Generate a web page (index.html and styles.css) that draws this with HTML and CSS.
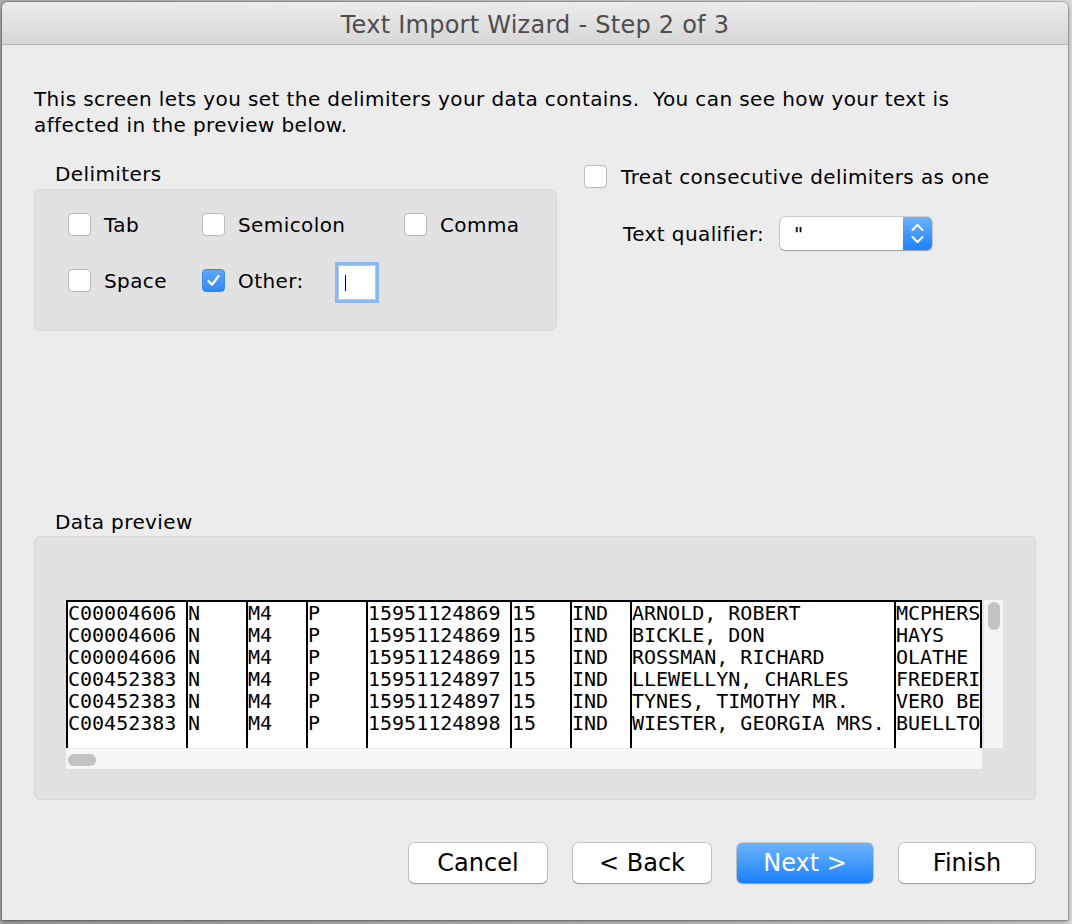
FILE: index.html
```html
<!DOCTYPE html>
<html>
<head>
<meta charset="utf-8">
<title>Text Import Wizard - Step 2 of 3</title>
<link rel="stylesheet" href="styles.css">
</head>
<body>
<div class="window">
  <div class="titlebar">Text Import Wizard - Step 2 of 3</div>
  <div class="content">
    <p class="intro">This screen lets you set the delimiters your data contains.&nbsp; You can see how your text is<br>affected in the preview below.</p>

    <div class="options">
      <div class="delims">
        <div class="group-label">Delimiters</div>
        <div class="group-box">
          <div class="checks">
            <label class="check"><span class="box"></span><span>Tab</span></label>
            <label class="check"><span class="box"></span><span>Semicolon</span></label>
            <label class="check"><span class="box"></span><span>Comma</span></label>
            <label class="check"><span class="box"></span><span>Space</span></label>
            <label class="check"><span class="box on"><svg width="21" height="21" viewBox="0 0 21 21"><path d="M5.5 11 L9 14.8 L15.5 6" fill="none" stroke="#fff" stroke-width="2.2" stroke-linecap="round" stroke-linejoin="round"/></svg></span><span>Other:</span><span class="field"><span class="caret"></span></span></label>
          </div>
        </div>
      </div>
      <div class="right">
        <label class="check treat"><span class="box"></span><span>Treat consecutive delimiters as one</span></label>
        <div class="qualifier">
          <span>Text qualifier:</span>
          <div class="popup">
            <span class="popup-value">"</span>
            <span class="popup-arrows"><svg width="29" height="33" viewBox="0 0 29 33"><path d="M9.5 13 L14.5 8 L19.5 13" fill="none" stroke="#fff" stroke-width="2" stroke-linecap="round" stroke-linejoin="round"/><path d="M9.5 20 L14.5 25 L19.5 20" fill="none" stroke="#fff" stroke-width="2" stroke-linecap="round" stroke-linejoin="round"/></svg></span>
          </div>
        </div>
      </div>
    </div>

    <div class="group-label preview-label">Data preview</div>
    <div class="preview-box">
      <div class="frame">
        <div class="grid-area">
          <div class="cols">
            <div class="col w120">C00004606
C00004606
C00004606
C00452383
C00452383
C00452383</div>
            <div class="col w60">N
N
N
N
N
N</div>
            <div class="col w60">M4
M4
M4
M4
M4
M4</div>
            <div class="col w60">P
P
P
P
P
P</div>
            <div class="col w144">15951124869
15951124869
15951124869
15951124897
15951124897
15951124898</div>
            <div class="col w60">15
15
15
15
15
15</div>
            <div class="col w60">IND
IND
IND
IND
IND
IND</div>
            <div class="col w264">ARNOLD, ROBERT
BICKLE, DON
ROSSMAN, RICHARD
LLEWELLYN, CHARLES
TYNES, TIMOTHY MR.
WIESTER, GEORGIA MRS.</div>
            <div class="col last">MCPHERS
HAYS
OLATHE
FREDERI
VERO BE
BUELLTO</div>
          </div>
          <div class="hscroll"><div class="hthumb"></div></div>
        </div>
        <div class="vscroll"><div class="vthumb"></div></div>
      </div>
    </div>

    <div class="buttons">
      <button class="btn wide">Cancel</button>
      <button class="btn wide">&lt; Back</button>
      <button class="btn primary">Next &gt;</button>
      <button class="btn">Finish</button>
    </div>
  </div>
</div>
</body>
</html>
```

FILE: styles.css
```css
html, body {
  margin: 0;
  padding: 0;
}
body {
  width: 1072px;
  height: 924px;
  overflow: hidden;
  background: linear-gradient(90deg, #a8a8a8, #bdbdbd 50%, #d9d9d9);
  font-family: "DejaVu Sans", "Noto Sans", sans-serif;
  color: #000;
}
.window {
  margin: 2px 4px 0 2px;
  width: 1066px;
  height: 918px;
  background: #ececec;
  border-radius: 6px 6px 0 0;
  box-shadow: 0 0 0 1px rgba(0,0,0,0.18), 0 2px 5px rgba(0,0,0,0.35);
  display: flex;
  flex-direction: column;
  overflow: hidden;
}
.titlebar {
  height: 43px;
  box-sizing: border-box;
  padding-top: 3px;
  flex: none;
  border-bottom: 1px solid #b4b4b4;
  background: linear-gradient(#ececec, #d7d7d7);
  display: flex;
  align-items: center;
  justify-content: center;
  font-size: 24px;
  letter-spacing: 0.25px;
  color: #4d4d4d;
}
.content {
  padding: 0 32px;
  letter-spacing: 0.4px;
}
.intro {
  margin: 41px 0 0;
  font-size: 20px;
  line-height: 26px;
}
.options {
  display: flex;
  margin-top: 24px;
}
.delims {
  width: 523px;
  flex: none;
}
.group-label {
  font-size: 20px;
  line-height: 24px;
  padding-left: 21px;
}
.group-box {
  margin-top: 3px;
  height: 142px;
  box-sizing: border-box;
  background: #e2e2e2;
  border: 1px solid #d8d8d8;
  border-radius: 6px;
  padding: 23px 0 0 33px;
}
.checks {
  display: grid;
  grid-template-columns: 134px 202px auto;
  row-gap: 33px;
}
.check {
  display: flex;
  align-items: center;
  gap: 13px;
  font-size: 20px;
  height: 23px;
  white-space: nowrap;
}
.box {
  width: 23px;
  height: 23px;
  flex: none;
  box-sizing: border-box;
  border: 1px solid #bcbcbc;
  border-radius: 4px;
  background: #fff;
  box-shadow: 0 0.5px 0 rgba(0,0,0,0.06);
  display: flex;
  align-items: center;
  justify-content: center;
}
.box.on {
  background: linear-gradient(#5fa8f9, #2f87f6);
  border-color: #3a86e8;
}
.field {
  width: 44px;
  height: 41px;
  box-sizing: border-box;
  flex: none;
  margin-left: 18px;
  margin-top: 4px;
  border: 3px solid #8ab7ed;
  background: #fff;
  box-shadow: inset 0 0 0 1px #b8c8dc;
  display: flex;
  align-items: center;
  padding-left: 7px;
}
.caret {
  width: 1px;
  height: 16px;
  background: #000;
}
.right {
  margin-left: 27px;
  padding-top: 3px;
}
.treat {
  gap: 14px;
}
.qualifier {
  display: flex;
  align-items: center;
  margin-top: 29px;
  padding-left: 39px;
  font-size: 20px;
}
.popup {
  margin-left: 16px;
  width: 152px;
  height: 33px;
  box-sizing: border-box;
  border-radius: 5px;
  background: #fff;
  box-shadow: 0 0 0 0.5px rgba(0,0,0,0.28), 0 1px 1.5px rgba(0,0,0,0.22);
  display: flex;
  align-items: center;
  overflow: hidden;
}
.popup-value {
  flex: 1;
  padding-left: 14px;
  font-size: 20px;
}
.popup-arrows {
  width: 29px;
  height: 33px;
  background: linear-gradient(#6cb2fb, #1c81fa);
  display: flex;
}
.preview-label {
  margin-top: 179px;
}
.preview-box {
  margin-top: 2px;
  height: 264px;
  box-sizing: border-box;
  background: #e2e2e2;
  border: 1px solid #d8d8d8;
  border-radius: 6px;
  padding: 63px 0 0 31px;
}
.frame {
  display: flex;
}
.grid-area {
  width: 916px;
  flex: none;
}
.cols {
  display: flex;
  height: 148px;
  box-sizing: border-box;
  border-top: 2px solid #000;
  background: #fff;
}
.col {
  box-sizing: border-box;
  border-left: 2px solid #000;
  font-family: "DejaVu Sans Mono", "Liberation Mono", monospace;
  font-size: 20px;
  line-height: 22px;
  letter-spacing: 0;
  white-space: pre;
  overflow: hidden;
  flex: none;
}
.w60 { width: 60px; }
.w120 { width: 120px; }
.w144 { width: 144px; }
.w264 { width: 264px; }
.col.last {
  width: 88px;
  border-right: 2px solid #000;
}
.hscroll {
  height: 21px;
  box-sizing: border-box;
  background: #f7f7f7;
  border-top: 1px solid #e9e9e9;
  padding: 5px 0 0 2px;
}
.hthumb {
  width: 28px;
  height: 12px;
  border-radius: 6px;
  background: #c2c2c2;
}
.vscroll {
  margin-left: 2px;
  width: 19px;
  height: 148px;
  box-sizing: border-box;
  background: #f5f5f5;
  padding: 2px 0 0 4px;
}
.vthumb {
  width: 12px;
  height: 28px;
  border-radius: 6px;
  background: #c2c2c2;
}
.buttons {
  display: flex;
  justify-content: flex-end;
  gap: 26px;
  margin-top: 43px;
  padding-right: 1px;
  letter-spacing: 0;
}
.btn {
  width: 136px;
  height: 40px;
  box-sizing: border-box;
  border: none;
  border-radius: 5px;
  background: #fff;
  box-shadow: 0 0 0 0.5px rgba(0,0,0,0.3), 0 1px 1.5px rgba(0,0,0,0.25);
  font-family: "DejaVu Sans", "Noto Sans", sans-serif;
  font-size: 24px;
  color: #000;
  padding: 0;
}
.btn.wide {
  width: 138px;
}
.btn.primary {
  background: linear-gradient(#6db4fb, #1a80fa);
  color: #fff;
}
```
